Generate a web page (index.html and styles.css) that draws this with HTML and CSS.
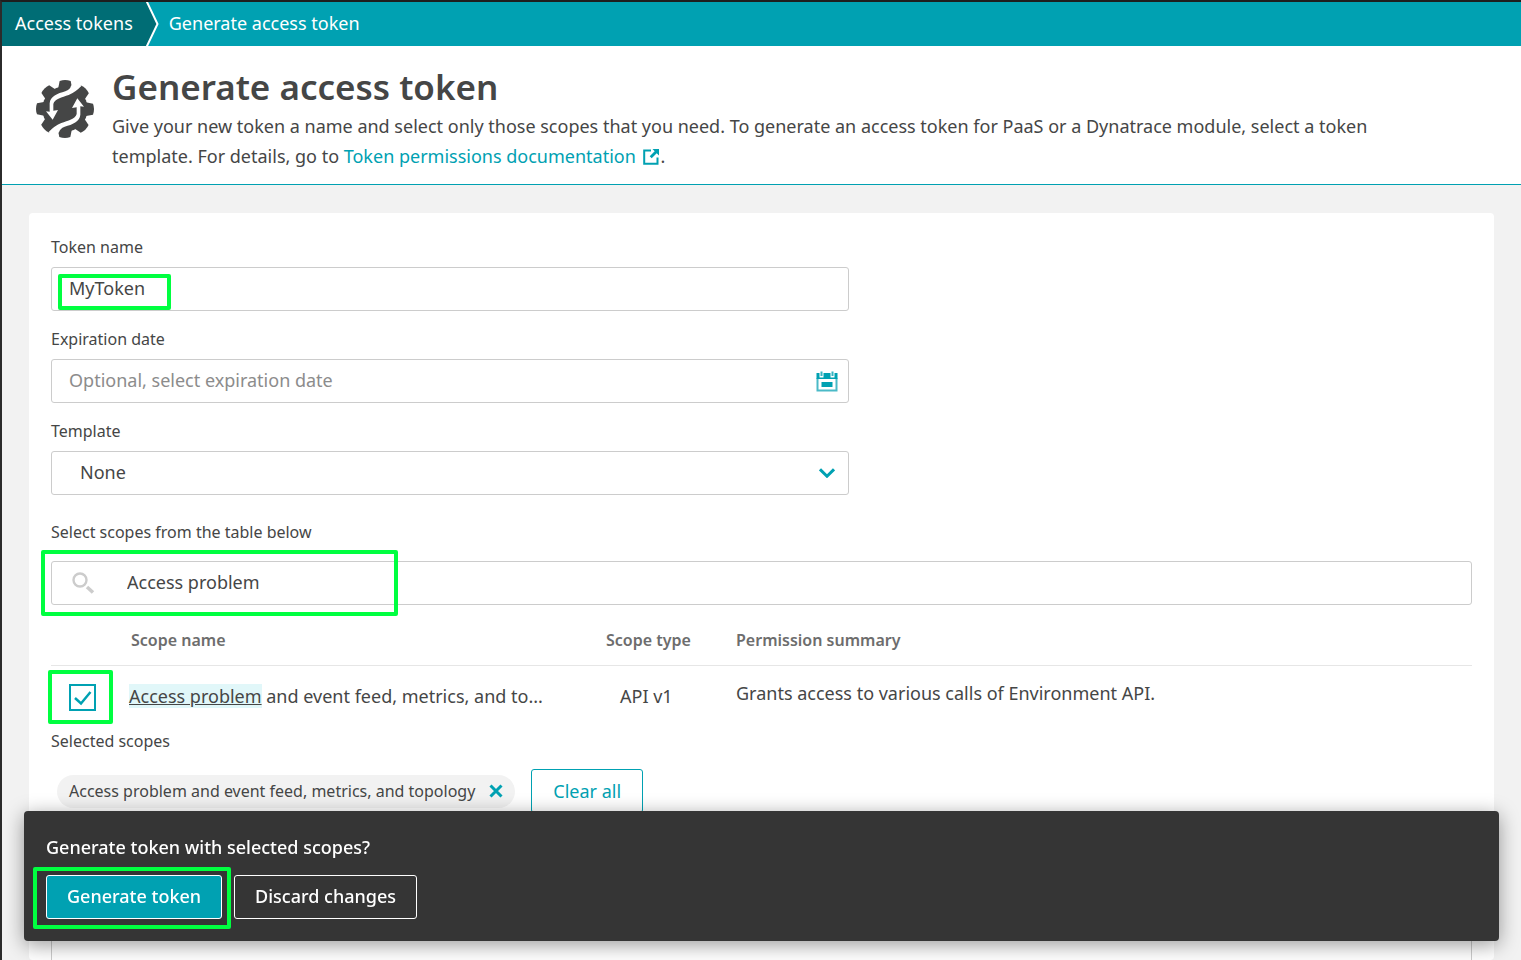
FILE: index.html
```html
<!DOCTYPE html>
<html lang="en">
<head>
<meta charset="utf-8">
<title>Generate access token</title>
<link rel="stylesheet" href="styles.css">
</head>
<body>
<div class="app">
  <nav class="breadcrumbs" aria-label="Breadcrumb">
    <a class="crumb crumb-parent" href="#">Access tokens</a>
    <svg class="crumb-arrow" viewBox="0 0 13 44" aria-hidden="true"><path class="crumb-arrow-fill" d="M0 0h1l10.500 22L1 44H0z"/><path class="crumb-arrow-line" d="M.5-1 11.500 22 .5 45"/></svg>
    <a class="crumb" href="#">Generate access token</a>
  </nav>

  <header class="page-header">
    <svg class="gear" viewBox="0 0 174 174" aria-hidden="true">
      <g class="gear-body">
        <circle cx="87" cy="87" r="68"/>
        <path id="tooth" d="M66 28 71 3Q87-3 104 3L109 28z"/>
        <use href="#tooth" transform="rotate(45 87 87)"/>
        <use href="#tooth" transform="rotate(90 87 87)"/>
        <use href="#tooth" transform="rotate(135 87 87)"/>
        <use href="#tooth" transform="rotate(180 87 87)"/>
        <use href="#tooth" transform="rotate(225 87 87)"/>
        <use href="#tooth" transform="rotate(270 87 87)"/>
        <use href="#tooth" transform="rotate(315 87 87)"/>
      </g>
      <g id="swirl">
        <path class="swirl-fill" d="M105 17 Q103 28 88 34 C64 41 43 49 41 70V95L30 94 50 119 66 90 52 92V72C56 57 78 52 98 45 Q118 37 136 18L118 8z"/>
      </g>
      <use href="#swirl" transform="rotate(180 87 87)"/>
    </svg>
    <div class="header-copy">
      <h1>Generate access token</h1>
      <p>Give your new token a name and select only those scopes that you need. To generate an access token for PaaS or a Dynatrace module, select a token template. For details, go to <a class="doc-link" href="#">Token permissions documentation <svg class="ext" viewBox="0 0 16 16" aria-hidden="true"><path d="M8 1.500H1.200v13.300h13.300V8.500" fill="none" stroke="currentColor" stroke-width="2"/><path d="M9.500 0H16v6.500l-2.300-2.300-5 5-2-2 5-5z" fill="currentColor"/></svg></a>.</p>
    </div>
  </header>

  <main class="content">
    <form class="card">
      <div class="field">
        <label for="token-name">Token name</label>
        <div class="control mark mark-name"><input id="token-name" type="text" value="MyToken"></div>
      </div>
      <div class="field">
        <label for="expiration">Expiration date</label>
        <div class="control">
          <input id="expiration" type="text" placeholder="Optional, select expiration date">
          <svg class="calendar" viewBox="0 0 22 21" aria-hidden="true"><path d="M1.500 7v12.500h19V7" fill="none" stroke="#4bbac7" stroke-width="2"/><path d="M.5 2h3v4.500h4V2h7v4.500h4V2h3v6H.5zM5.500 11h11v5h-11z" fill="#00a1b2"/><path d="M5.500.5v4.500M16.500.5v4.500" stroke="#35b3c1" stroke-width="2"/></svg>
        </div>
      </div>
      <div class="field">
        <label for="template">Template</label>
        <div class="control">
          <select id="template"><option>None</option></select>
          <svg class="chevron" viewBox="0 0 16 10" aria-hidden="true"><path d="M1 1.300 8 8.200l7-6.900"/></svg>
        </div>
      </div>
      <div class="field field-search">
        <label for="scope-search">Select scopes from the table below</label>
        <div class="control mark mark-search">
          <svg class="search" viewBox="0 0 24 24" aria-hidden="true"><circle cx="9" cy="9" r="6.500" stroke-width="2.400"/><path d="m16 16 6 5.500" stroke-width="3.500"/></svg>
          <input id="scope-search" type="text" value="Access problem">
        </div>
      </div>

      <table class="scopes">
        <thead>
          <tr><th class="col-check"></th><th class="col-name">Scope name</th><th class="col-type">Scope type</th><th class="col-summary">Permission summary</th></tr>
        </thead>
        <tbody>
          <tr>
            <td><span class="mark mark-check"><input type="checkbox" aria-label="Access problem and event feed, metrics, and topology" checked></span></td>
            <td class="scope-name"><mark>Access problem</mark> and event feed, metrics, and to...</td>
            <td class="scope-type">API v1</td>
            <td class="scope-summary">Grants access to various calls of Environment API.</td>
          </tr>
        </tbody>
      </table>

      <div class="selected-title">Selected scopes</div>
      <div class="selected">
        <span class="chip">Access problem and event feed, metrics, and topology
          <button class="remove" type="button" aria-label="Remove scope"><svg viewBox="0 0 14 14" aria-hidden="true"><path d="m1.500 1.500 11 11M12.500 1.500l-11 11"/></svg></button>
        </span>
        <button class="clear" type="button">Clear all</button>
      </div>
      <div class="panel"></div>
    </form>
  </main>

  <section class="action-bar" aria-label="Confirm">
    <p>Generate token with selected scopes?</p>
    <div class="actions">
      <span class="mark mark-generate"><button class="primary" type="button">Generate token</button></span>
      <button class="secondary" type="button">Discard changes</button>
    </div>
  </section>
</div>
</body>
</html>
```
FILE: styles.css
```css
*, *::before, *::after { box-sizing: border-box; }
body {
  margin: 0;
  font: 18px/30px "Noto Sans", "Open Sans", sans-serif;
  color: #454646;
}
button, input, select { font: inherit; color: inherit; }
.app {
  display: flex;
  flex-direction: column;
  height: 100vh;
  overflow: hidden;
  border-top: 2px solid #1e1e1e;
  border-left: 2px solid #2b2b2b;
  background: #f2f2f2;
}

.breadcrumbs {
  display: flex;
  flex: none;
  height: 44px;
  background: #00a1b2;
}
.crumb {
  padding: 6px 10px;
  color: #fff;
  text-decoration: none;
}
.crumb-parent { padding: 6px 13px; background: #006d75; }
.crumb-arrow { width: 13px; height: 44px; }
.crumb-arrow-fill { fill: #006d75; }
.crumb-arrow-line { fill: none; stroke: #fff; stroke-width: 2; }

.page-header {
  display: flex;
  flex: none;
  gap: 18px;
  padding: 21px 110px 13px 34px;
  background: #fff;
  border-bottom: 1px solid #00a1b2;
}
.gear { flex: none; width: 58px; height: 58px; margin-top: 13px; }
.gear-body { fill: #454646; }
.swirl-fill { fill: #fff; }
.page-header h1 { margin: 0 0 4px; font-size: 35px; line-height: 40px; font-weight: 600; }
.page-header p { margin: 0; }
.doc-link { color: #00a1b2; text-decoration: none; }
.ext { width: 16px; height: 16px; margin: 0 2px; vertical-align: -2px; }

.content { flex: 1; min-height: 0; padding: 28px 27px 0; }
.card {
  display: flex;
  flex-direction: column;
  height: 100%;
  padding: 22px 22px 0;
  background: #fff;
  border-radius: 4px;
}
.field { width: 798px; max-width: 100%; margin-bottom: 16px; }
.field label { display: block; margin-bottom: 8px; font-size: 16px; line-height: 24px; }
.field-search { width: 100%; margin: 9px 0 0; }
.field-search label { margin-bottom: 17px; }
.control {
  position: relative;
  display: flex;
  align-items: center;
  height: 44px;
  border: 1px solid #ccc;
  border-radius: 3px;
  background: #fff;
}
.control input, .control select {
  flex: 1;
  min-width: 0;
  height: 42px;
  padding: 0 17px 2px;
  border: 0;
  outline: 0;
  background: transparent;
  appearance: none;
}
.control select { padding: 0 28px 2px; }
.control input::placeholder { color: #8c8c8c; opacity: 1; }
.calendar { width: 22px; height: 21px; margin-right: 10px; }
.chevron { width: 16px; height: 10px; margin-right: 13px; fill: none; stroke: #00a1b2; stroke-width: 3; }
.search { width: 24px; height: 24px; margin: 0 15px 0 19px; fill: none; stroke: #ccc; }

/* highlight frames */
.mark { position: relative; }
.mark::after {
  content: "";
  position: absolute;
  border: 4px solid #00ff40;
  border-radius: 2px;
  pointer-events: none;
}
.mark-name::after { left: 6px; top: 6px; width: 113px; height: 36px; }
.mark-search::after { left: -11px; top: -12px; width: 357px; height: 66px; }
.mark-check::after { left: -21px; top: -14px; width: 65px; height: 54px; }
.mark-generate::after { inset: -8px -9px -10px -13px; }

.scopes { width: 100%; border-collapse: collapse; table-layout: fixed; }
.scopes th {
  height: 60px;
  padding: 10px 0 0;
  border-bottom: 1px solid #e6e6e6;
  color: #6d6d6d;
  font-size: 16px;
  font-weight: 600;
  line-height: 24px;
  text-align: left;
}
.scopes td { height: 64px; padding: 0; }
.col-check { width: 80px; }
.col-name { width: 475px; }
.col-type { width: 130px; }
.mark-check { display: block; width: 27px; height: 27px; margin-left: 18px; }
.mark-check input {
  display: block;
  width: 27px;
  height: 27px;
  margin: 0;
  appearance: none;
  border: 2px solid #00a1b2;
  background: #fff url('data:image/svg+xml,<svg xmlns="http://www.w3.org/2000/svg" viewBox="0 0 23 23"><path d="M4 12l6 5.500L19.500 6" fill="none" stroke="%2300a1b2" stroke-width="2.500"/></svg>');
}
.scopes .scope-name, .scopes .scope-type { padding-bottom: 2px; }
.scope-name mark { margin-left: -2px; }
mark { background: #e1f7f9; color: inherit; text-decoration: underline; }
.scopes .scope-type { padding-left: 14px; }
.scopes .scope-summary { padding-bottom: 8px; }

.selected-title { font-size: 16px; line-height: 24px; }
.selected { display: flex; align-items: center; gap: 16px; margin: 16px 0 44px 6px; }
.chip {
  display: flex;
  align-items: center;
  gap: 12px;
  height: 33px;
  padding: 0 10px 0 12px;
  border-radius: 17px;
  background: #f2f2f2;
  font-size: 16px;
}
.remove { display: flex; padding: 2px; border: 0; background: none; }
.remove svg { width: 14px; height: 14px; fill: none; stroke: #00a1b2; stroke-width: 3; }
.clear {
  height: 44px;
  padding: 0 21px;
  border: 1px solid #00a1b2;
  border-radius: 3px;
  background: #fff;
  color: #00a1b2;
}
.panel { flex: 1; border: 1px solid #ccc; border-bottom: 0; }

.action-bar {
  position: fixed;
  left: 24px;
  right: 22px;
  bottom: 19px;
  padding: 21px 22px 22px;
  border-radius: 4px;
  background: #353535;
  color: #fff;
  box-shadow: 0 4px 20px rgba(0, 0, 0, .4);
}
.action-bar p { margin: 0 0 13px; font-weight: 500; }
.actions { display: flex; gap: 12px; }
.actions button {
  display: block;
  height: 44px;
  padding: 0 20px 2px;
  border: 1px solid #fff;
  border-radius: 3px;
  background: transparent;
  font-weight: 500;
}
.actions .primary { background: #00a1b2; }
```
